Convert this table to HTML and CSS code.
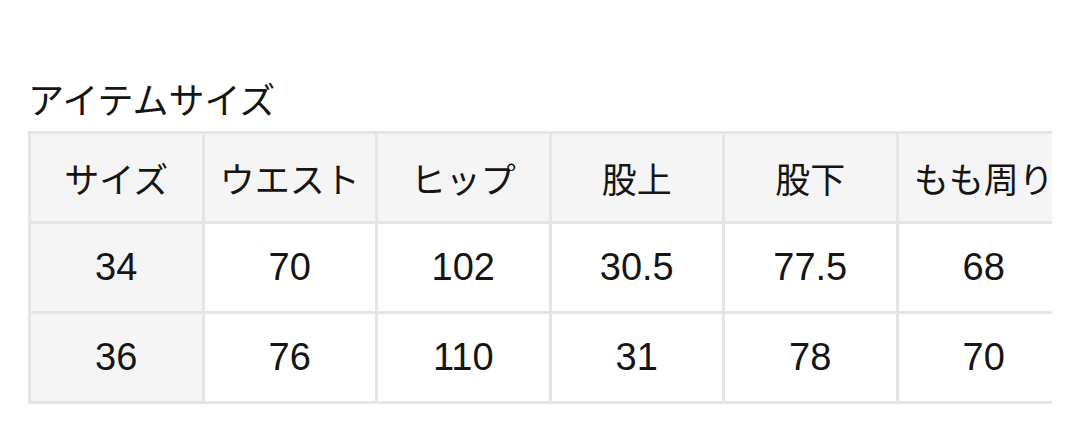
FILE: index.html
```html
<!DOCTYPE html>
<html lang="ja">
<head>
<meta charset="utf-8">
<link rel="stylesheet" href="styles.css">
</head>
<body>
<section class="size-section">
  <h2 class="title">アイテムサイズ</h2>
  <div class="table-wrap">
    <table class="size-table">
      <thead>
        <tr>
          <th>サイズ</th>
          <th>ウエスト</th>
          <th>ヒップ</th>
          <th>股上</th>
          <th>股下</th>
          <th>もも周り</th>
        </tr>
      </thead>
      <tbody>
        <tr>
          <th class="num">34</th>
          <td class="num">70</td>
          <td class="num">102</td>
          <td class="num">30.5</td>
          <td class="num">77.5</td>
          <td class="num">68</td>
        </tr>
        <tr>
          <th class="num">36</th>
          <td class="num">76</td>
          <td class="num">110</td>
          <td class="num">31</td>
          <td class="num">78</td>
          <td class="num">70</td>
        </tr>
      </tbody>
    </table>
  </div>
</section>
</body>
</html>
```

FILE: styles.css
```css
html, body {
  margin: 0;
  padding: 0;
  background: #ffffff;
}

body {
  font-family: "Noto Sans CJK JP", "Noto Sans", sans-serif;
  color: #151515;
}

.size-section {
  padding: 78px 0 0 28px;
}

.title {
  margin: 0 0 12px 0;
  font-size: 36px;
  line-height: 41px;
  font-weight: 400;
}

.table-wrap {
  width: 1024px;
  overflow: hidden;
}

.size-table {
  border-collapse: collapse;
  table-layout: fixed;
  width: 1044px;
}

.size-table th,
.size-table td {
  border: 3px solid #e5e5e5;
  height: 87px;
  padding: 0;
  text-align: center;
  vertical-align: middle;
  font-size: 35px;
  font-weight: 400;
  white-space: nowrap;
  overflow: hidden;
}

.size-table thead th,
.size-table tbody th {
  background: #f5f5f5;
}

.size-table td {
  background: #ffffff;
}

.size-table .num {
  font-family: "Liberation Sans", Arial, sans-serif;
  font-size: 38px;
}
```
